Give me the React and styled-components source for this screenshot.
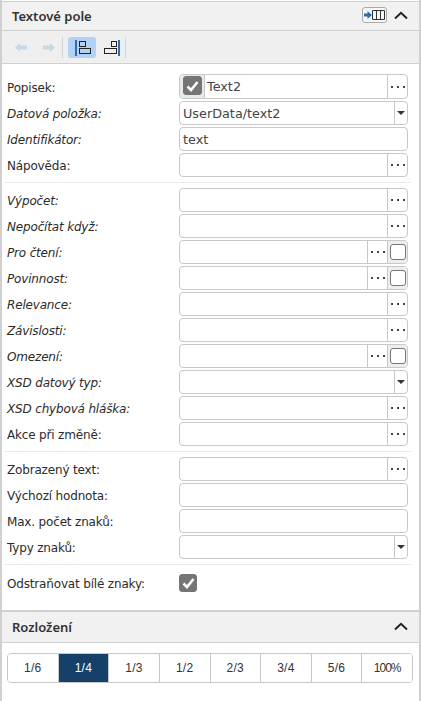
import React from 'react'
import styled, { createGlobalStyle } from 'styled-components'

const Global = createGlobalStyle`
    html, body { margin: 0; padding: 0; background: #fff; }
    body { font-family: "DejaVu Sans", sans-serif; font-size: 12px; letter-spacing: -0.17px; color: #2b2b2b; }
`

const Panel = styled.div`
    width: 421px;
    height: 701px;
    box-sizing: border-box;
    border-left: 2px solid #d0d0d0;
    border-right: 2px solid #d0d0d0;
    overflow: hidden;
`

const SectionHeader = styled.div`
    height: ${props => props.h}px;
    margin-top: ${props => props.top}px;
    display: flex;
    align-items: center;
    padding: 0 11px 0 10px;
    background: #f1f1f1;
    border-top: ${props => props.line}px solid #d0d0d0;
    border-bottom: 1px solid #d0d0d0;
    font-family: "Noto Sans", sans-serif;
    font-weight: 600;
    font-size: 13px;
    letter-spacing: 0;
    color: #333;
`

const Title = styled.span`
    flex: 1;
`

const ColumnButton = styled.span`
    width: 25px;
    height: 16px;
    box-sizing: border-box;
    margin: 0 7px 2px 0;
    border: 1px solid #aaa;
    border-radius: 3px;
    background: #f7f7f7;
    display: flex;
    align-items: center;
    justify-content: center;
`

const Toolbar = styled.div`
    height: 33px;
    box-sizing: border-box;
    display: flex;
    align-items: center;
    padding: 1px 0 0 5px;
    background: #efefef;
    border-bottom: 1px solid #d0d0d0;
`

const ToolButton = styled.span`
    width: 28px;
    height: 21px;
    flex: none;
    display: flex;
    align-items: center;
    justify-content: center;
    border-radius: 3px;
    background: ${props => props.active ? '#b3d1f5' : 'transparent'};
`

const Sep = styled.span`
    width: 1px;
    height: 21px;
    margin: 0 ${props => props.right || 0}px 0 ${props => props.left || 0}px;
    background: #d4d4d4;
`

const Form = styled.div`
    padding: 10px 7px 0 2px;
`

const Row = styled.div`
    height: ${props => props.tall ? 25 : 24}px;
    margin-bottom: 2px;
    padding: 0 4px 0 3px;
    display: flex;
    align-items: center;
`

const Label = styled.label`
    width: 172px;
    flex: none;
    padding-top: 2px;
    font-style: ${props => props.italic ? 'italic' : 'normal'};
`

const Field = styled.div`
    width: 229px;
    height: ${props => props.tall ? 25 : 24}px;
    box-sizing: border-box;
    display: flex;
    align-items: stretch;
    border: 1px solid #c8c8c8;
    border-radius: 4px;
    background: #fff;
    overflow: hidden;
`

const Value = styled.span`
    flex: 1;
    min-width: 0;
    padding-left: ${props => props.pad || 3}px;
    line-height: 24px;
    font-size: 12.8px;
    letter-spacing: 0;
    color: #444;
`

const Side = styled.span`
    width: ${props => props.narrow ? 13 : 20}px;
    box-sizing: border-box;
    flex: none;
    border-left: 1px solid #c8c8c8;
    display: flex;
    align-items: center;
    justify-content: center;
`

const Dots = styled.span`
    display: flex;
    gap: 4px;
    & i {
        width: 2px;
        height: 2px;
        background: #444;
    }
`

const Caret = styled.span`
    width: 0;
    height: 0;
    border-left: 4px solid transparent;
    border-right: 4px solid transparent;
    border-top: 4px solid #333;
`

const BoxCell = styled.span`
    width: 20px;
    box-sizing: border-box;
    flex: none;
    border-left: 1px solid #c8c8c8;
    background: #eee;
    display: flex;
    align-items: center;
    justify-content: center;
`

const LeadCell = styled.span`
    width: 25px;
    box-sizing: border-box;
    flex: none;
    padding-bottom: 2px;
    border-right: 1px solid #c8c8c8;
    background: #e9e9e9;
    display: flex;
    align-items: center;
    justify-content: center;
`

const Box = styled.span`
    width: ${props => props.size}px;
    height: ${props => props.size}px;
    box-sizing: border-box;
    flex: none;
    border-radius: 3px;
    border: 1px solid ${props => props.checked ? '#757575' : '#777'};
    background: ${props => props.checked ? '#757575' : '#fff'};
    display: flex;
    align-items: center;
    justify-content: center;
`

// top margin collapses with the row's 2px margin above it
const Divider = styled.div`
    height: 1px;
    margin: 5px 0 ${props => props.after || 5}px 0;
    background: #ebebeb;
`

const Segments = styled.div`
    display: flex;
    height: 30px;
    box-sizing: border-box;
    margin: 10px 6px 0 5px;
    border: 1px solid #c8c8c8;
    border-radius: 4px;
    overflow: hidden;
`

const Segment = styled.span`
    flex: 1;
    display: flex;
    align-items: center;
    justify-content: center;
    font-family: "Liberation Sans", sans-serif;
    font-size: 12px;
    letter-spacing: ${props => props.tight ? '-1px' : '0.3px'};
    color: ${props => props.active ? '#fff' : '#333'};
    background: ${props => props.active ? '#14406a' : '#fff'};
    & + & { border-left: 1px solid #c8c8c8; }
`

const Check = () => (
    <svg width="13" height="12" viewBox="0 0 13 12">
        <path d="M1.5 6.5 L5 10 L11.5 2" fill="none" stroke="#fff" strokeWidth="2.6" />
    </svg>
)

const Chevron = () => (
    <svg width="14" height="10" viewBox="0 0 14 10">
        <path d="M1 7.5 L7 1.8 L13 7.5" fill="none" stroke="#222" strokeWidth="2" />
    </svg>
)

const Arrow = ({ flip }) => (
    <svg width="12" height="9" viewBox="0 0 12 9" style={flip ? { transform: 'scaleX(-1)' } : undefined}>
        <path d="M0 4.5 L5 0 V2.5 H12 V6.5 H5 V9 Z" fill="#c9d8e6" />
    </svg>
)

const LayoutLeft = () => (
    <svg width="18" height="17" viewBox="0 0 18 17">
        <rect x="2" y="1" width="2" height="16" fill="#2f6fb0" />
        <rect x="6.5" y="2.5" width="6" height="5" fill="none" stroke="#222" />
        <rect x="6.5" y="9.5" width="11" height="5" fill="none" stroke="#222" />
    </svg>
)

const LayoutRight = () => (
    <svg width="20" height="17" viewBox="0 0 20 17">
        <rect x="18" y="1" width="2" height="16" fill="#2f6fb0" />
        <rect x="11.5" y="2.5" width="5" height="5" fill="none" stroke="#222" />
        <rect x="4.5" y="9.5" width="12" height="5" fill="none" stroke="#222" />
    </svg>
)

const ColumnIcon = () => (
    <svg width="21" height="12" viewBox="0 0 21 12">
        <path d="M0 4.5 H3.5 V2 L8 6 L3.5 10 V7.5 H0 Z" fill="#2f6fb0" />
        <path d="M8.5 1.5 H20.5 V10.5 H8.5 Z M12.5 1.5 V10.5 M16.5 1.5 V10.5" fill="none" stroke="#333" />
    </svg>
)

const More = () => <Side><Dots><i /><i /><i /></Dots></Side>

const rowsA = [
    { label: 'Identifikátor:', italic: true, value: 'text' },
    { label: 'Nápověda:', more: true },
]

const rowsB = [
    { label: 'Výpočet:', italic: true, more: true },
    { label: 'Nepočítat když:', italic: true, more: true },
    { label: 'Pro čtení:', italic: true, more: true, box: true },
    { label: 'Povinnost:', italic: true, more: true, box: true },
    { label: 'Relevance:', italic: true, more: true },
    { label: 'Závislosti:', italic: true, more: true },
    { label: 'Omezení:', italic: true, more: true, box: true },
    { label: 'XSD datový typ:', italic: true, select: true },
    { label: 'XSD chybová hláška:', italic: true, more: true },
    { label: 'Akce při změně:', more: true },
]

const rowsC = [
    { label: 'Zobrazený text:', more: true },
    { label: 'Výchozí hodnota:' },
    { label: 'Max. počet znaků:' },
    { label: 'Typy znaků:', select: true },
]

const FormRow = ({ label, italic, value, more, box, select }) => (
    <Row>
        <Label italic={italic}>{label}</Label>
        <Field>
            <Value>{value}</Value>
            {more && <More />}
            {select && <Side narrow><Caret /></Side>}
            {box && <BoxCell><Box size={16} /></BoxCell>}
        </Field>
    </Row>
)

const widths = ['1/6', '1/4', '1/3', '1/2', '2/3', '3/4', '5/6', '100%']

const App = () => (
    <>
        <Global />
        <Panel>
            <SectionHeader top={1} line={1} h={28}>
                <Title>Textové pole</Title>
                <ColumnButton><ColumnIcon /></ColumnButton>
                <Chevron />
            </SectionHeader>
            <Toolbar>
                <ToolButton><Arrow /></ToolButton>
                <ToolButton><Arrow flip /></ToolButton>
                <Sep left={-1} right={5} />
                <ToolButton active><LayoutLeft /></ToolButton>
                <ToolButton><LayoutRight /></ToolButton>
                <Sep left={1} />
            </Toolbar>
            <Form>
                <Row tall>
                    <Label>Popisek:</Label>
                    <Field tall>
                        <LeadCell><Box size={19} checked><Check /></Box></LeadCell>
                        <Value pad={2}>Text2</Value>
                        <More />
                    </Field>
                </Row>
                <Row>
                    <Label italic>Datová položka:</Label>
                    <Field>
                        <Value>UserData/text2</Value>
                        <Side narrow><Caret /></Side>
                    </Field>
                </Row>
                {rowsA.map(r => <FormRow key={r.label} {...r} />)}
                <Divider />
                {rowsB.map(r => <FormRow key={r.label} {...r} />)}
                <Divider />
                {rowsC.map(r => <FormRow key={r.label} {...r} />)}
                <Divider after={6} />
                <Row>
                    <Label>Odstraňovat bílé znaky:</Label>
                    <Box size={18} checked><Check /></Box>
                </Row>
            </Form>
            <SectionHeader top={15} line={2} h={30}>
                <Title>Rozložení</Title>
                <Chevron />
            </SectionHeader>
            <Segments>
                {widths.map(w => <Segment key={w} active={w === '1/4'} tight={w === '100%'}>{w}</Segment>)}
            </Segments>
        </Panel>
    </>
)

export default App
